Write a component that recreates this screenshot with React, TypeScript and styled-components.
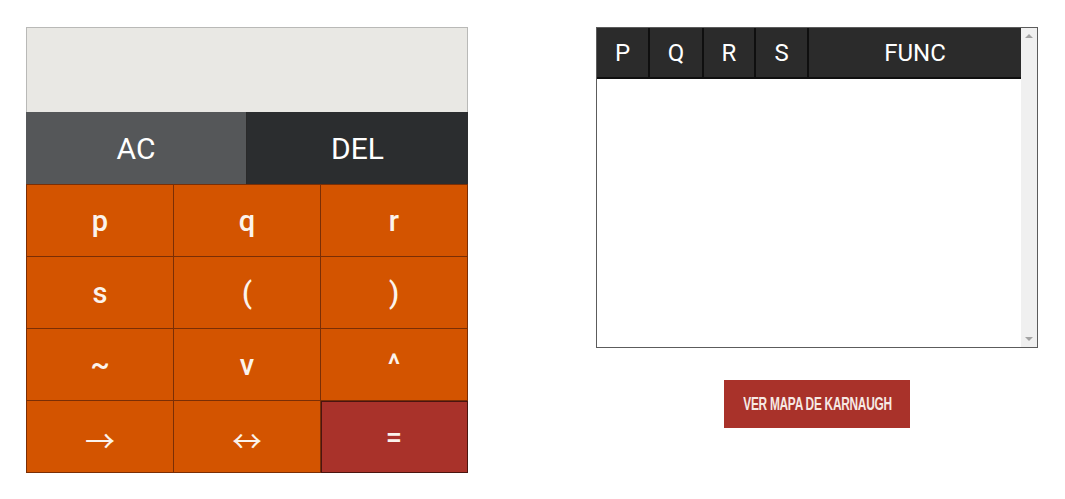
import React from "react";
import styled, { createGlobalStyle } from "styled-components";

const Global = createGlobalStyle`
  html, body { margin: 0; padding: 0; background: #ffffff; }
  body { font-family: Roboto, "Liberation Sans", sans-serif; }
`;

const Page = styled.div`
  display: flex;
  align-items: flex-start;
  padding: 27px 0 0 26px;
  gap: 128px;
`;

const Calculator = styled.div`
  width: 442px;
  display: flex;
  flex-direction: column;
`;

const Display = styled.div`
  height: 84px;
  background: #e9e8e4;
  border: 1px solid #b9b9b7;
  border-bottom: none;
`;

const ControlRow = styled.div`
  display: grid;
  grid-template-columns: 221px 221px;
  height: 72px;
`;

const ControlKey = styled.button<{ $tone: "light" | "dark" }>`
  border: none;
  border-right: ${(p) => (p.$tone === "light" ? "1px solid #2a2a2a" : "none")};
  background: ${(p) => (p.$tone === "light" ? "#555759" : "#2b2d2f")};
  color: #ffffff;
  font-family: Roboto, "Liberation Sans", sans-serif;
  font-size: 30px;
  font-weight: 400;
  padding: 0;
`;

const Keypad = styled.div`
  display: grid;
  grid-template-columns: repeat(3, 1fr);
  grid-auto-rows: 72px;
  border-left: 1px solid #7a2e05;
  border-top: 1px solid #7a2e05;
`;

const Key = styled.button<{ $accent?: boolean; $arrow?: boolean }>`
  border: none;
  border-right: 1px solid ${(p) => (p.$accent ? "#4a150f" : "#7a2e05")};
  border-bottom: 1px solid ${(p) => (p.$accent ? "#4a150f" : "#7a2e05")};
  ${(p) => (p.$accent ? "box-shadow: inset 1px 1px 0 #4a150f;" : "")}
  background: ${(p) => (p.$accent ? "#a9322a" : "#d35400")};
  color: #fbf3ec;
  font-family: ${(p) =>
    p.$arrow
      ? '"Noto Sans CJK JP", "DejaVu Sans", sans-serif'
      : 'Roboto, "Liberation Sans", sans-serif'};
  font-size: ${(p) => (p.$arrow ? "30px" : "29px")};
  font-weight: ${(p) => (p.$arrow ? 400 : 500)};
  padding: ${(p) => (p.$arrow ? "4px 0 0" : "0")};
`;

const Side = styled.div`
  display: flex;
  flex-direction: column;
  align-items: center;
  gap: 32px;
`;

const TableBox = styled.div`
  width: 440px;
  height: 319px;
  border: 1px solid #5c5c5c;
  background: #ffffff;
  display: flex;
`;

const TableArea = styled.div`
  flex: 1;
  overflow: hidden;
`;

const Scrollbar = styled.div`
  width: 16px;
  background: #f0f0f0;
  display: flex;
  flex-direction: column;
  justify-content: space-between;
  align-items: center;
  padding: 6px 0;
  box-sizing: border-box;
`;

const Arrow = styled.div<{ $dir: "up" | "down" }>`
  width: 0;
  height: 0;
  border-left: 4px solid transparent;
  border-right: 4px solid transparent;
  ${(p) =>
    p.$dir === "up"
      ? "border-bottom: 4px solid #a3a3a3;"
      : "border-top: 4px solid #a3a3a3;"}
`;

const Table = styled.table`
  border-collapse: collapse;
  width: 424px;
  table-layout: fixed;
`;

const HeadCell = styled.th<{ $w?: number }>`
  ${(p) => (p.$w ? `width: ${p.$w}px;` : "")}
  height: 48px;
  background: #2b2b2b;
  color: #ffffff;
  border: 2px solid #0f0f0f;
  border-top: none;
  font-family: Roboto, "Liberation Sans", sans-serif;
  font-size: 24px;
  font-weight: 400;
  padding: 1px 0 0;
  &:first-child { border-left: none; }
  &:last-child { border-right: none; }
`;

const MapButton = styled.button`
  width: 186px;
  height: 48px;
  background: #a9322a;
  border: none;
  color: #f6e9e4;
  padding: 0;
  display: flex;
  align-items: center;
  justify-content: center;
  overflow: hidden;
`;

const MapLabel = styled.span`
  display: inline-block;
  white-space: nowrap;
  font-family: "Liberation Sans", sans-serif;
  font-weight: 700;
  font-size: 18px;
  letter-spacing: -0.4px;
  transform: scaleX(0.66);
`;

const keys: { label: string; accent?: boolean; arrow?: boolean }[] = [
  { label: "p" },
  { label: "q" },
  { label: "r" },
  { label: "s" },
  { label: "(" },
  { label: ")" },
  { label: "~" },
  { label: "v" },
  { label: "^" },
  { label: "→", arrow: true },
  { label: "↔", arrow: true },
  { label: "=", accent: true },
];

const headers = [
  { label: "P", w: 51 },
  { label: "Q", w: 52 },
  { label: "R", w: 50 },
  { label: "S", w: 51 },
  { label: "FUNC" },
];

export default function App() {
  return (
    <>
      <Global />
      <Page>
        <Calculator>
          <Display />
          <ControlRow>
            <ControlKey $tone="light">AC</ControlKey>
            <ControlKey $tone="dark">DEL</ControlKey>
          </ControlRow>
          <Keypad>
            {keys.map((k) => (
              <Key key={k.label} $accent={k.accent} $arrow={k.arrow}>
                {k.label}
              </Key>
            ))}
          </Keypad>
        </Calculator>
        <Side>
          <TableBox>
            <TableArea>
              <Table>
                <thead>
                  <tr>
                    {headers.map((h) => (
                      <HeadCell key={h.label} $w={h.w}>
                        {h.label}
                      </HeadCell>
                    ))}
                  </tr>
                </thead>
                <tbody />
              </Table>
            </TableArea>
            <Scrollbar>
              <Arrow $dir="up" />
              <Arrow $dir="down" />
            </Scrollbar>
          </TableBox>
          <MapButton>
            <MapLabel>VER MAPA DE KARNAUGH</MapLabel>
          </MapButton>
        </Side>
      </Page>
    </>
  );
}
